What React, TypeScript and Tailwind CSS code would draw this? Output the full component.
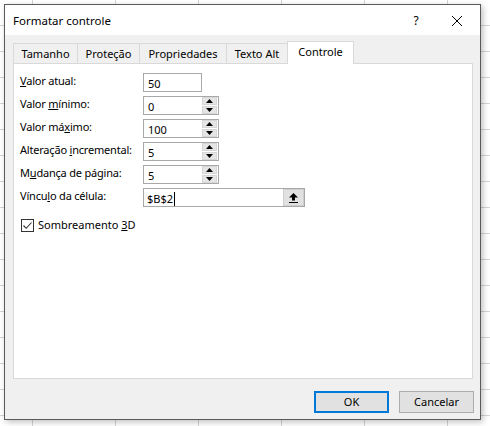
import React from "react";

const font = { fontFamily: '"Noto Sans", "Open Sans", sans-serif' };

function Spinner() {
  return (
    <div className="flex flex-col w-[15px] h-[17px] gap-px mr-px">
      <div className="flex-1 bg-[#e5e5e5] border border-[#d6d6d6] flex items-center justify-center">
        <svg width="7" height="4" viewBox="0 0 7 4">
          <path d="M3.5 0 L7 4 L0 4 Z" fill="#000" />
        </svg>
      </div>
      <div className="flex-1 bg-[#e5e5e5] border border-[#d6d6d6] flex items-center justify-center">
        <svg width="7" height="4" viewBox="0 0 7 4">
          <path d="M0 0 L7 0 L3.5 4 Z" fill="#000" />
        </svg>
      </div>
    </div>
  );
}

function Field({
  label,
  value,
  spin = true,
}: {
  label: React.ReactNode;
  value: string;
  spin?: boolean;
}) {
  return (
    <div className="flex items-start h-[23px]">
      <div className="w-[123px] leading-[16px] tracking-[-0.2px] text-black">{label}</div>
      <div
        className={`flex items-center h-[19px] bg-white border border-[#a8a8a8] ${
          spin ? "w-[76px]" : "w-[59px]"
        }`}
      >
        <span className="flex-1 pl-[4px] leading-[16px] pt-[2px]">{value}</span>
        {spin && <Spinner />}
      </div>
    </div>
  );
}

const tabs = [
  { name: "Tamanho", w: "w-[65px]" },
  { name: "Proteção", w: "w-[63px]" },
  { name: "Propriedades", w: "w-[88px]" },
  { name: "Texto Alt", w: "w-[62px]" },
];

export default function App() {
  return (
    <div
      className="w-[490px] h-[426px] overflow-hidden bg-white bg-[linear-gradient(to_right,#d4d4d4_1px,transparent_1px),linear-gradient(to_bottom,#d4d4d4_1px,transparent_1px)] bg-[size:83px_26px] bg-[position:32px_25px] pt-[4px] pl-[4px] text-[11px] text-black"
      style={font}
    >
      <div className="w-[477px] h-[416px] border border-[#5a5a5a] bg-[#f0f0f0] shadow-[2px_2px_6px_rgba(0,0,0,0.25)] flex flex-col">
        {/* title bar */}
        <div className="h-[30px] bg-white flex items-center pl-[8px] pt-[1px] shrink-0">
          <span className="text-[11.5px] flex-1">Formatar controle</span>
          <span className="text-[12px] w-[20px] text-center mr-[25px]">?</span>
          <svg width="12" height="12" viewBox="0 0 12 12" className="mr-[17px]">
            <path d="M1 1 L11 11 M11 1 L1 11" stroke="#000" strokeWidth="1" />
          </svg>
        </div>

        {/* tabs */}
        <div className="flex items-end h-[28px] pl-[8px] shrink-0 relative z-10">
          {tabs.map((t, i) => (
            <div
              key={t.name}
              className={`${t.w} h-[20px] border border-b-0 border-[#d9d9d9] flex items-center justify-center leading-[16px] ${
                i > 0 ? "-ml-px" : ""
              }`}
            >
              {t.name}
            </div>
          ))}
          <div className="w-[67px] h-[23px] -ml-px -mb-px bg-white border border-b-0 border-[#d9d9d9] flex items-center justify-center leading-[16px] pb-[2px]">
            Controle
          </div>
        </div>

        {/* panel */}
        <div className="ml-[8px] w-[460px] h-[316px] bg-white border border-[#d9d9d9] pl-[6px] pt-[9px] shrink-0">
          <Field
            label={
              <>
                <u>V</u>alor atual:
              </>
            }
            value="50"
            spin={false}
          />
          <Field
            label={
              <>
                Valor <u>m</u>ínimo:
              </>
            }
            value="0"
          />
          <Field
            label={
              <>
                Valor má<u>x</u>imo:
              </>
            }
            value="100"
          />
          <Field
            label={
              <>
                Alteração <u>i</u>ncremental:
              </>
            }
            value="5"
          />
          <Field
            label={
              <>
                M<u>u</u>dança de página:
              </>
            }
            value="5"
          />
          <div className="flex items-start h-[23px]">
            <div className="w-[123px] leading-[16px] tracking-[-0.2px]">
              Víncu<u>l</u>o da célula:
            </div>
            <div className="flex items-center h-[19px] w-[162px] bg-white border border-[#a8a8a8]">
              <span className="flex-1 pl-[3px] leading-[16px] pt-[2px] flex items-center">
                $B$2<span className="inline-block w-px h-[14px] bg-black ml-px" />
              </span>
              <div className="w-[21px] h-[17px] bg-[#e1e1e1] border border-[#cfcfcf] flex items-center justify-center">
                <svg width="9" height="10" viewBox="0 0 9 10">
                  <path d="M4.5 0 L9 4.5 L6 4.5 L6 7.5 L3 7.5 L3 4.5 L0 4.5 Z" fill="#000" />
                  <rect x="0" y="9" width="9" height="1" fill="#000" />
                </svg>
              </div>
            </div>
          </div>
          <div className="flex items-center mt-[6px] pl-[1px]">
            <div className="w-[13px] h-[13px] border border-[#333] bg-white flex items-center justify-center">
              <svg width="11" height="11" viewBox="0 0 11 11">
                <path d="M1.5 5.5 L4.2 8.3 L9.5 2.5" stroke="#333" strokeWidth="1.1" fill="none" />
              </svg>
            </div>
            <span className="ml-[4px] leading-[16px]">
              Sombreamento <u>3</u>D
            </span>
          </div>
        </div>

        {/* buttons */}
        <div className="flex justify-end gap-[10px] pr-[6px] mt-[12px]">
          <button className="w-[75px] h-[22px] bg-[#e1e1e1] border-2 border-[#0078d7] leading-[16px]">
            OK
          </button>
          <button className="w-[75px] h-[22px] bg-[#e1e1e1] border border-[#adadad] leading-[16px]">
            Cancelar
          </button>
        </div>
      </div>
    </div>
  );
}
